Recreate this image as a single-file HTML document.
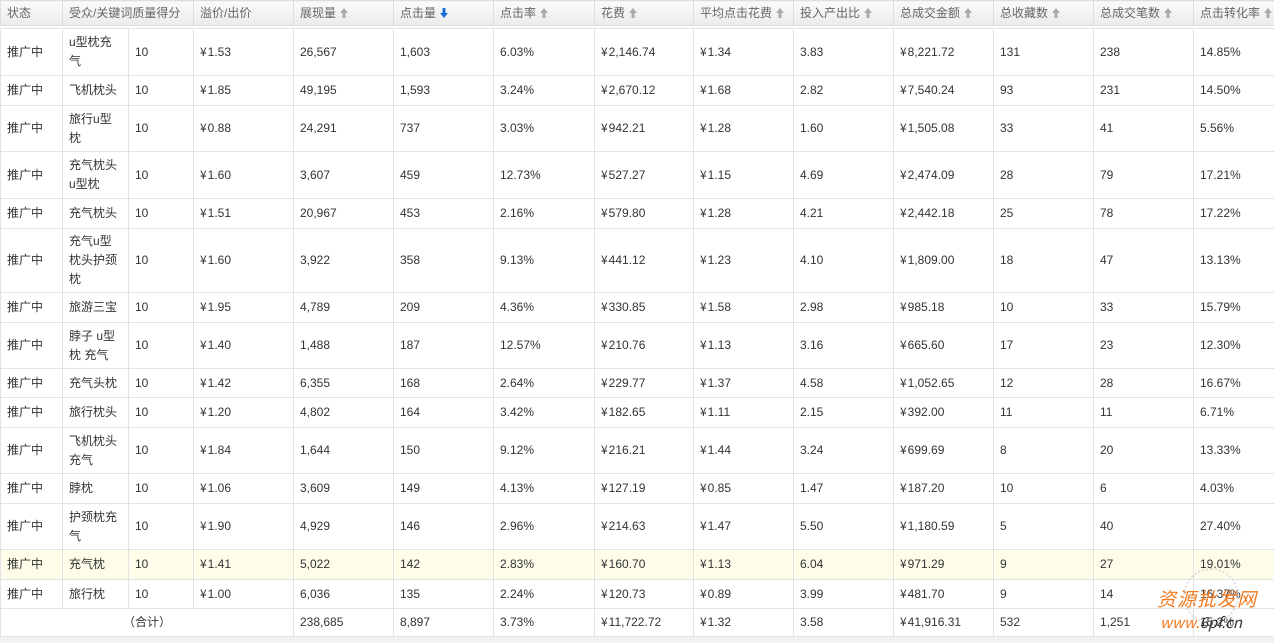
<!DOCTYPE html>
<html><head><meta charset="utf-8"><style>
body{margin:0;width:1274px;height:643px;overflow:hidden;background:#f2f2f2;font-family:"Liberation Sans","Noto Sans CJK SC",sans-serif;font-size:12px;color:#333;position:relative}
table{border-collapse:collapse;table-layout:fixed;width:1274px;position:absolute;left:0;top:0;background:#fff}
td,th{border:1px solid #e3e3e3;padding:0 0 0 6px;text-align:left;vertical-align:middle;overflow:hidden;white-space:nowrap;line-height:19px}
th{font-weight:normal;color:#666;height:24px;background:linear-gradient(#fafafa,#ebebeb);border-color:#ddd}
tr.gap td{height:2px;padding:0;background:#fff;border-left:none;border-right:none}
td.kw{white-space:normal;word-break:break-all;padding-right:10px}
svg{vertical-align:-2px;margin-left:3px}
tr.hl td{background:#fdfde9}
td.tot{text-align:center;padding:0}
.y{font-family:"Noto Sans CJK SC",sans-serif;margin-right:1px;line-height:0}
.wm{position:absolute;color:#f47a20;font-family:"Noto Sans CJK SC",sans-serif;font-style:italic}
</style></head><body>
<svg width="0" height="0" style="position:absolute"><defs>
<symbol id="u" viewBox="0 0 10 12"><path d="M5 1 L9 6 H6.5 V11 H3.5 V6 H1 Z" fill="#aaa"/></symbol>
<symbol id="d" viewBox="0 0 10 12"><path d="M5 11 L9 6 H6.5 V1 H3.5 V6 H1 Z" fill="#1a6ed8"/></symbol>
</defs></svg>
<table>
<colgroup><col style="width:62px"><col style="width:66px"><col style="width:65px"><col style="width:100px"><col style="width:100px"><col style="width:100px"><col style="width:101px"><col style="width:99px"><col style="width:100px"><col style="width:100px"><col style="width:100px"><col style="width:100px"><col style="width:100px"><col style="width:81px"></colgroup>
<tr><th>状态</th><th colspan="2">受众/关键词质量得分</th><th>溢价/出价</th><th>展现量<svg width="10" height="12"><use href="#u"/></svg></th><th>点击量<svg width="10" height="12"><use href="#d"/></svg></th><th>点击率<svg width="10" height="12"><use href="#u"/></svg></th><th>花费<svg width="10" height="12"><use href="#u"/></svg></th><th>平均点击花费<svg width="10" height="12"><use href="#u"/></svg></th><th>投入产出比<svg width="10" height="12"><use href="#u"/></svg></th><th>总成交金额<svg width="10" height="12"><use href="#u"/></svg></th><th>总收藏数<svg width="10" height="12"><use href="#u"/></svg></th><th>总成交笔数<svg width="10" height="12"><use href="#u"/></svg></th><th>点击转化率<svg width="10" height="12"><use href="#u"/></svg></th></tr>
<tr class="gap"><td colspan="14"></td></tr>
<tr style="height:47px"><td>推广中</td><td class="kw">u型枕充气</td><td>10</td><td><span class="y">¥</span>1.53</td><td>26,567</td><td>1,603</td><td>6.03%</td><td><span class="y">¥</span>2,146.74</td><td><span class="y">¥</span>1.34</td><td>3.83</td><td><span class="y">¥</span>8,221.72</td><td>131</td><td>238</td><td>14.85%</td></tr>
<tr style="height:30px"><td>推广中</td><td class="kw">飞机枕头</td><td>10</td><td><span class="y">¥</span>1.85</td><td>49,195</td><td>1,593</td><td>3.24%</td><td><span class="y">¥</span>2,670.12</td><td><span class="y">¥</span>1.68</td><td>2.82</td><td><span class="y">¥</span>7,540.24</td><td>93</td><td>231</td><td>14.50%</td></tr>
<tr style="height:46px"><td>推广中</td><td class="kw">旅行u型枕</td><td>10</td><td><span class="y">¥</span>0.88</td><td>24,291</td><td>737</td><td>3.03%</td><td><span class="y">¥</span>942.21</td><td><span class="y">¥</span>1.28</td><td>1.60</td><td><span class="y">¥</span>1,505.08</td><td>33</td><td>41</td><td>5.56%</td></tr>
<tr style="height:47px"><td>推广中</td><td class="kw">充气枕头u型枕</td><td>10</td><td><span class="y">¥</span>1.60</td><td>3,607</td><td>459</td><td>12.73%</td><td><span class="y">¥</span>527.27</td><td><span class="y">¥</span>1.15</td><td>4.69</td><td><span class="y">¥</span>2,474.09</td><td>28</td><td>79</td><td>17.21%</td></tr>
<tr style="height:30px"><td>推广中</td><td class="kw">充气枕头</td><td>10</td><td><span class="y">¥</span>1.51</td><td>20,967</td><td>453</td><td>2.16%</td><td><span class="y">¥</span>579.80</td><td><span class="y">¥</span>1.28</td><td>4.21</td><td><span class="y">¥</span>2,442.18</td><td>25</td><td>78</td><td>17.22%</td></tr>
<tr style="height:64px"><td>推广中</td><td class="kw">充气u型枕头护颈枕</td><td>10</td><td><span class="y">¥</span>1.60</td><td>3,922</td><td>358</td><td>9.13%</td><td><span class="y">¥</span>441.12</td><td><span class="y">¥</span>1.23</td><td>4.10</td><td><span class="y">¥</span>1,809.00</td><td>18</td><td>47</td><td>13.13%</td></tr>
<tr style="height:30px"><td>推广中</td><td class="kw">旅游三宝</td><td>10</td><td><span class="y">¥</span>1.95</td><td>4,789</td><td>209</td><td>4.36%</td><td><span class="y">¥</span>330.85</td><td><span class="y">¥</span>1.58</td><td>2.98</td><td><span class="y">¥</span>985.18</td><td>10</td><td>33</td><td>15.79%</td></tr>
<tr style="height:46px"><td>推广中</td><td class="kw">脖子 u型枕 充气</td><td>10</td><td><span class="y">¥</span>1.40</td><td>1,488</td><td>187</td><td>12.57%</td><td><span class="y">¥</span>210.76</td><td><span class="y">¥</span>1.13</td><td>3.16</td><td><span class="y">¥</span>665.60</td><td>17</td><td>23</td><td>12.30%</td></tr>
<tr style="height:29px"><td>推广中</td><td class="kw">充气头枕</td><td>10</td><td><span class="y">¥</span>1.42</td><td>6,355</td><td>168</td><td>2.64%</td><td><span class="y">¥</span>229.77</td><td><span class="y">¥</span>1.37</td><td>4.58</td><td><span class="y">¥</span>1,052.65</td><td>12</td><td>28</td><td>16.67%</td></tr>
<tr style="height:30px"><td>推广中</td><td class="kw">旅行枕头</td><td>10</td><td><span class="y">¥</span>1.20</td><td>4,802</td><td>164</td><td>3.42%</td><td><span class="y">¥</span>182.65</td><td><span class="y">¥</span>1.11</td><td>2.15</td><td><span class="y">¥</span>392.00</td><td>11</td><td>11</td><td>6.71%</td></tr>
<tr style="height:46px"><td>推广中</td><td class="kw">飞机枕头充气</td><td>10</td><td><span class="y">¥</span>1.84</td><td>1,644</td><td>150</td><td>9.12%</td><td><span class="y">¥</span>216.21</td><td><span class="y">¥</span>1.44</td><td>3.24</td><td><span class="y">¥</span>699.69</td><td>8</td><td>20</td><td>13.33%</td></tr>
<tr style="height:30px"><td>推广中</td><td class="kw">脖枕</td><td>10</td><td><span class="y">¥</span>1.06</td><td>3,609</td><td>149</td><td>4.13%</td><td><span class="y">¥</span>127.19</td><td><span class="y">¥</span>0.85</td><td>1.47</td><td><span class="y">¥</span>187.20</td><td>10</td><td>6</td><td>4.03%</td></tr>
<tr style="height:46px"><td>推广中</td><td class="kw">护颈枕充气</td><td>10</td><td><span class="y">¥</span>1.90</td><td>4,929</td><td>146</td><td>2.96%</td><td><span class="y">¥</span>214.63</td><td><span class="y">¥</span>1.47</td><td>5.50</td><td><span class="y">¥</span>1,180.59</td><td>5</td><td>40</td><td>27.40%</td></tr>
<tr class="hl" style="height:30px"><td>推广中</td><td class="kw">充气枕</td><td>10</td><td><span class="y">¥</span>1.41</td><td>5,022</td><td>142</td><td>2.83%</td><td><span class="y">¥</span>160.70</td><td><span class="y">¥</span>1.13</td><td>6.04</td><td><span class="y">¥</span>971.29</td><td>9</td><td>27</td><td>19.01%</td></tr>
<tr style="height:29px"><td>推广中</td><td class="kw">旅行枕</td><td>10</td><td><span class="y">¥</span>1.00</td><td>6,036</td><td>135</td><td>2.24%</td><td><span class="y">¥</span>120.73</td><td><span class="y">¥</span>0.89</td><td>3.99</td><td><span class="y">¥</span>481.70</td><td>9</td><td>14</td><td>16.37%</td></tr>
<tr style="height:28px"><td colspan="4" class="tot">（合计）</td><td>238,685</td><td>8,897</td><td>3.73%</td><td><span class="y">¥</span>11,722.72</td><td><span class="y">¥</span>1.32</td><td>3.58</td><td><span class="y">¥</span>41,916.31</td><td>532</td><td>1,251</td><td>15.2%</td></tr>
</table>
<div style="position:absolute;left:1183px;top:568px;width:52px;height:52px;border-radius:50%;border:2px dotted #ccc;opacity:.6"></div>
<div class="wm" style="left:1157px;top:585px;font-size:19px;letter-spacing:1px">资源批发网</div>
<div class="wm" style="left:1160px;top:612px;font-size:15px">www.<span style="color:#333">6pf.cn</span></div>
</body></html>
